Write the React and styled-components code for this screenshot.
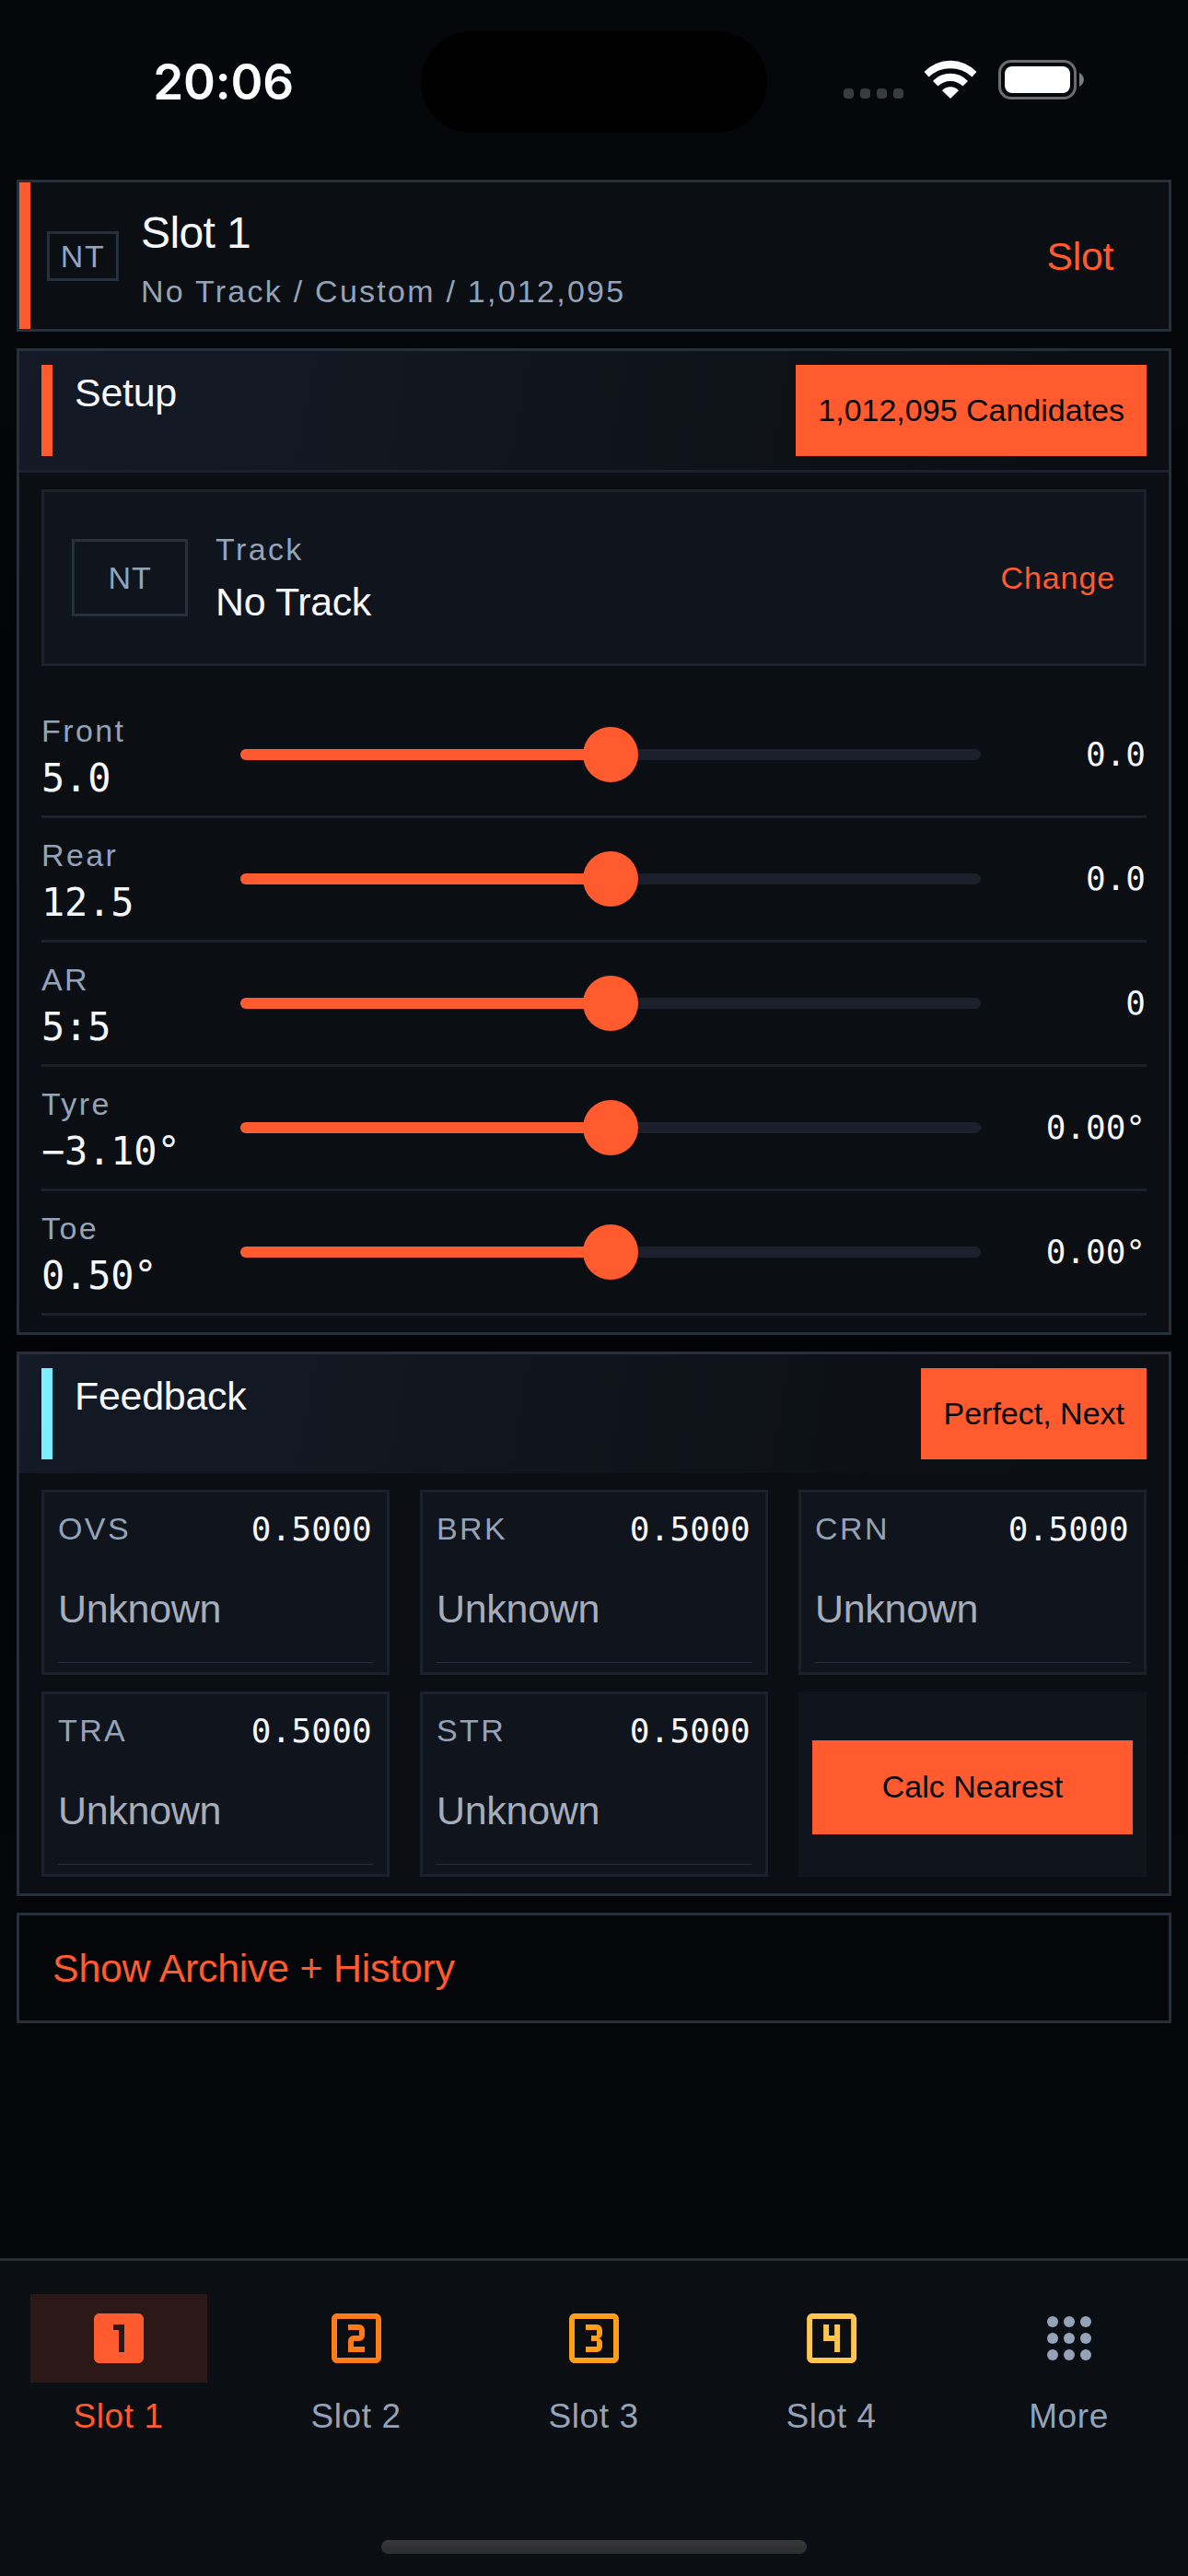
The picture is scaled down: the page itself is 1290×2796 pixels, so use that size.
import React from 'react';
import styled, { createGlobalStyle } from 'styled-components';
import { MdLooksOne, MdOutlineLooksTwo, MdOutlineLooks3, MdOutlineLooks4 } from 'react-icons/md';

const accent = '#ff5b2f';
const muted = '#94a3b8';
const ink = '#f6f8fc';
const surface = '#0b0e13';
const raised = '#10141c';
const outline = '#26303d';
const hairline = '#1b202c';
const mono = "'DejaVu Sans Mono', 'Liberation Mono', monospace";

const GlobalStyle = createGlobalStyle`
    * {
        box-sizing: border-box;
    }

    body {
        margin: 0;
        background: #050609;
        color: ${ink};
        font-family: 'Liberation Sans', Arial, sans-serif;
    }

    button {
        font-family: inherit;
        border: none;
        border-radius: 0;
        padding: 0;
        background: none;
        white-space: nowrap;
    }
`;

const Screen = styled.div`
    width: 1290px;
    height: 2796px;
    display: flex;
    flex-direction: column;
    overflow: hidden;
    background: linear-gradient(180deg, #06070b 0%, #020305 42%, #050609 78%, #050609 100%);
`;

/* status bar */

const StatusBar = styled.div`
    display: grid;
    grid-template-columns: 457px 376px 1fr;
    align-items: center;
    height: 195px;
    flex: none;
    padding: 34px 0 51px;
`;

const Clock = styled.div`
    padding-left: 28px;
    text-align: center;
    font-family: Inter, sans-serif;
    font-size: 53px;
    font-weight: 600;
    line-height: 60px;
    letter-spacing: -0.2px;
    color: #fff;
`;

const Island = styled.div`
    height: 110px;
    border-radius: 55px;
    background: #000;
`;

const StatusIcons = styled.div`
    display: flex;
    align-items: flex-end;
    padding-left: 83px;
    margin-top: -5px;
`;

const SignalDots = styled.div`
    display: flex;
    gap: 7px;
    margin: 0 22px 1px 0;
`;

const SignalDot = styled.span`
    width: 11px;
    height: 11px;
    border-radius: 4px;
    background: #3a3b3f;
`;

const Wifi = styled.svg`
    width: 58px;
    height: 42px;
    margin: 0 23px 1px 0;
`;

const Battery = styled.svg`
    width: 94px;
    height: 43px;
`;

/* panels */

const Content = styled.main`
    flex: 1;
    display: flex;
    flex-direction: column;
    gap: 18px;
    padding: 0 18px;
`;

const Panel = styled.section`
    border: 3px solid ${outline};
    background: ${surface};
`;

const SlotCard = styled(Panel)`
    display: flex;
    align-items: center;
    height: 165px;
    padding-right: 60px;
`;

const SlotStripe = styled.div`
    align-self: stretch;
    width: 12px;
    margin-right: 18px;
    background: ${accent};
`;

const TrackBadge = styled.div`
    display: flex;
    align-items: center;
    justify-content: center;
    width: ${(p) => (p.$large ? 126 : 78)}px;
    height: ${(p) => (p.$large ? 84 : 54)}px;
    border: 3px solid ${outline};
    color: ${muted};
    font-size: 34px;
    line-height: 38px;
    letter-spacing: ${(p) => (p.$large ? 0.9 : 1.5)}px;
`;

const SlotText = styled.div`
    flex: 1;
    margin-left: 24px;
`;

const SlotName = styled.div`
    font-size: 48px;
    line-height: 68px;
    letter-spacing: -0.6px;
`;

const SlotMeta = styled.div`
    margin-top: 8px;
    font-size: 34px;
    line-height: 42px;
    letter-spacing: 2.25px;
    color: ${muted};
`;

const SlotAction = styled.button`
    padding-top: 2px;
    font-size: 43px;
    line-height: 49px;
    letter-spacing: -0.4px;
    color: ${accent};
`;

const PanelHeader = styled.header`
    display: flex;
    padding: 15px 24px;
    background: linear-gradient(100deg, #141a26 0%, #111820 32%, #10141c 50%, ${surface} 90%);
    border-bottom: ${(p) => (p.$divided ? `3px solid ${hairline}` : 'none')};
`;

const HeaderMark = styled.div`
    width: 12px;
    margin-right: 24px;
    background: ${(p) => p.$color};
`;

const HeaderTitle = styled.div`
    flex: 1;
    font-size: 43px;
    line-height: 61px;
    letter-spacing: -0.3px;
`;

const FilledButton = styled.button`
    height: ${(p) => (p.$block ? 102 : 99)}px;
    width: ${(p) => (p.$block ? '100%' : 'auto')};
    padding: 0 24px 2px;
    background: ${accent};
    color: #050609;
    font-size: 34px;
    line-height: 38px;
`;

const PanelBody = styled.div`
    padding: 18px 24px;
`;

const TrackCard = styled.div`
    display: flex;
    align-items: center;
    height: 192px;
    margin-bottom: 30px;
    padding: 0 31px 0 30px;
    border: 3px solid ${hairline};
    background: ${raised};
`;

const TrackText = styled.div`
    flex: 1;
    margin-left: 30px;
`;

const Label = styled.div`
    font-size: 34px;
    line-height: ${(p) => p.$line || 51}px;
    letter-spacing: 2.4px;
    color: ${muted};
`;

const TrackName = styled.div`
    font-size: 43px;
    line-height: 61px;
    letter-spacing: -0.4px;
`;

const TextButton = styled.button`
    font-size: 34px;
    letter-spacing: 0.9px;
    color: ${accent};
`;

/* sliders */

const SliderRow = styled.div`
    display: grid;
    grid-template-columns: 216px 804px 180px;
    align-items: center;
    height: 135px;
    border-bottom: 3px solid ${hairline};
`;

const Current = styled.div`
    font-family: ${mono};
    font-size: 42px;
    line-height: 51px;
    letter-spacing: -0.2px;
    white-space: nowrap;
`;

const Track = styled.div`
    display: flex;
    align-items: center;
    height: 12px;
    border-radius: 6px;
    background: ${hairline};
`;

const TrackFill = styled.div`
    height: 12px;
    border-radius: 6px 0 0 6px;
    background: ${accent};
`;

const Thumb = styled.div`
    flex: none;
    width: 60px;
    height: 60px;
    margin-left: -30px;
    border-radius: 50%;
    background: ${accent};
`;

const Offset = styled.div`
    padding-right: 1px;
    font-family: ${mono};
    font-size: 36px;
    line-height: 42px;
    text-align: right;
`;

/* feedback */

const FeedbackGrid = styled.div`
    display: grid;
    grid-template-columns: repeat(3, 378px);
    gap: 18px 33px;
`;

const FeedbackCard = styled.div`
    height: 201px;
    padding: 15px 15px 10px;
    border: 3px solid ${hairline};
    background: ${raised};
`;

const FeedbackTop = styled.div`
    display: flex;
    justify-content: space-between;
    line-height: 49px;
`;

const FeedbackScore = styled.div`
    padding-right: 1px;
    font-family: ${mono};
    font-size: 36px;
    letter-spacing: 0.2px;
`;

const FeedbackField = styled.div`
    height: 117px;
    margin-top: 4px;
    border-bottom: 1px solid #29303d;
    font-size: 43px;
    line-height: 117px;
    letter-spacing: -0.3px;
    color: #a5adba;
`;

const ActionTile = styled.div`
    padding: 53px 15px 46px;
    background: ${raised};
`;

const ArchiveButton = styled.button`
    height: 120px;
    padding: 1px 36px 0;
    border: 3px solid ${outline};
    text-align: left;
    font-size: 43px;
    letter-spacing: -0.3px;
    color: ${accent};
`;

/* bottom navigation */

const BottomNav = styled.nav`
    flex: none;
    display: flex;
    flex-direction: column;
    height: 345px;
    border-top: 3px solid ${outline};
    background: ${surface};
`;

const Tabs = styled.div`
    flex: 1;
    display: grid;
    grid-template-columns: repeat(5, 1fr);
    padding-top: 36px;
`;

const Tab = styled.div`
    display: flex;
    flex-direction: column;
    align-items: center;
    color: ${(p) => (p.$active ? accent : muted)};
`;

const TabIcon = styled.div`
    display: flex;
    align-items: center;
    justify-content: center;
    width: 192px;
    height: 96px;
    margin-bottom: 12px;
    background: ${(p) => (p.$active ? '#2c1917' : 'transparent')};
    color: ${(p) => p.$color};
`;

const TabLabel = styled.div`
    padding-right: 1px;
    font-size: 37px;
    line-height: 49px;
    letter-spacing: 0.6px;
`;

const HomeIndicator = styled.div`
    width: 462px;
    height: 15px;
    margin: 0 auto 24px;
    border-radius: 8px;
    background: linear-gradient(180deg, #38383a, #2c2d2f);
`;

const settings = [
    { label: 'Front', value: '5.0', offset: '0.0', position: 50 },
    { label: 'Rear', value: '12.5', offset: '0.0', position: 50 },
    { label: 'AR', value: '5:5', offset: '0', position: 50 },
    { label: 'Tyre', value: '−3.10°', offset: '0.00°', position: 50 },
    { label: 'Toe', value: '0.50°', offset: '0.00°', position: 50 },
];

const feedback = ['OVS', 'BRK', 'CRN', 'TRA', 'STR'];

const DotsGrid = () => (
    <svg width="72" height="72" viewBox="0 0 24 24" fill="currentColor">
        {[6, 12, 18].map((y) => [6, 12, 18].map((x) => <circle key={`${x}-${y}`} cx={x} cy={y} r="2" />))}
    </svg>
);

const tabs = [
    { label: 'Slot 1', color: accent, icon: <MdLooksOne size={72} />, active: true },
    { label: 'Slot 2', color: '#ff7a18', icon: <MdOutlineLooksTwo size={72} /> },
    { label: 'Slot 3', color: '#ff9e1b', icon: <MdOutlineLooks3 size={72} /> },
    { label: 'Slot 4', color: '#ffc64d', icon: <MdOutlineLooks4 size={72} /> },
    { label: 'More', color: muted, icon: <DotsGrid /> },
];

const App = () => (
    <>
        <GlobalStyle />
        <Screen>
            <StatusBar>
                <Clock>20:06</Clock>
                <Island />
                <StatusIcons>
                    <SignalDots>
                        <SignalDot />
                        <SignalDot />
                        <SignalDot />
                        <SignalDot />
                    </SignalDots>
                    <Wifi viewBox="0 0 58 42" fill="#fff">
                        <path d="M0.5 13 A39.3 39.3 0 0 1 57.5 13 L52.5 18.4 A34.6 34.6 0 0 0 5.5 18.4 Z" />
                        <path d="M10 23 A25.9 25.9 0 0 1 48 23 L42.5 28.5 A19.6 19.6 0 0 0 15.5 28.5 Z" />
                        <path d="M20 33.3 A12 12 0 0 1 38 33.3 L29 42 Z" />
                    </Wifi>
                    <Battery viewBox="0 0 94 43">
                        <rect x="1.5" y="1.5" width="82" height="40" rx="12.5" fill="none" stroke="#6b6c70" strokeWidth="3" />
                        <rect x="7" y="7" width="71" height="29" rx="8" fill="#fff" />
                        <path d="M88 14 C94.5 17 94.5 26 88 29 Z" fill="#7c7d80" />
                    </Battery>
                </StatusIcons>
            </StatusBar>

            <Content>
                <SlotCard>
                    <SlotStripe />
                    <TrackBadge>NT</TrackBadge>
                    <SlotText>
                        <SlotName>Slot 1</SlotName>
                        <SlotMeta>No Track / Custom / 1,012,095</SlotMeta>
                    </SlotText>
                    <SlotAction>Slot</SlotAction>
                </SlotCard>

                <Panel>
                    <PanelHeader $divided>
                        <HeaderMark $color={accent} />
                        <HeaderTitle>Setup</HeaderTitle>
                        <FilledButton>1,012,095 Candidates</FilledButton>
                    </PanelHeader>
                    <PanelBody>
                        <TrackCard>
                            <TrackBadge $large>NT</TrackBadge>
                            <TrackText>
                                <Label $line={53}>Track</Label>
                                <TrackName>No Track</TrackName>
                            </TrackText>
                            <TextButton>Change</TextButton>
                        </TrackCard>
                        {settings.map((item) => (
                            <SliderRow key={item.label}>
                                <div>
                                    <Label>{item.label}</Label>
                                    <Current>{item.value}</Current>
                                </div>
                                <Track>
                                    <TrackFill style={{ width: `${item.position}%` }} />
                                    <Thumb />
                                </Track>
                                <Offset>{item.offset}</Offset>
                            </SliderRow>
                        ))}
                    </PanelBody>
                </Panel>

                <Panel>
                    <PanelHeader>
                        <HeaderMark $color="#78f0ff" />
                        <HeaderTitle>Feedback</HeaderTitle>
                        <FilledButton>Perfect, Next</FilledButton>
                    </PanelHeader>
                    <PanelBody>
                        <FeedbackGrid>
                            {feedback.map((name) => (
                                <FeedbackCard key={name}>
                                    <FeedbackTop>
                                        <Label $line={49}>{name}</Label>
                                        <FeedbackScore>0.5000</FeedbackScore>
                                    </FeedbackTop>
                                    <FeedbackField>Unknown</FeedbackField>
                                </FeedbackCard>
                            ))}
                            <ActionTile>
                                <FilledButton $block>Calc Nearest</FilledButton>
                            </ActionTile>
                        </FeedbackGrid>
                    </PanelBody>
                </Panel>

                <ArchiveButton>Show Archive + History</ArchiveButton>
            </Content>

            <BottomNav>
                <Tabs>
                    {tabs.map((tab) => (
                        <Tab key={tab.label} $active={tab.active}>
                            <TabIcon $active={tab.active} $color={tab.color}>
                                {tab.icon}
                            </TabIcon>
                            <TabLabel>{tab.label}</TabLabel>
                        </Tab>
                    ))}
                </Tabs>
                <HomeIndicator />
            </BottomNav>
        </Screen>
    </>
);

export default App;
